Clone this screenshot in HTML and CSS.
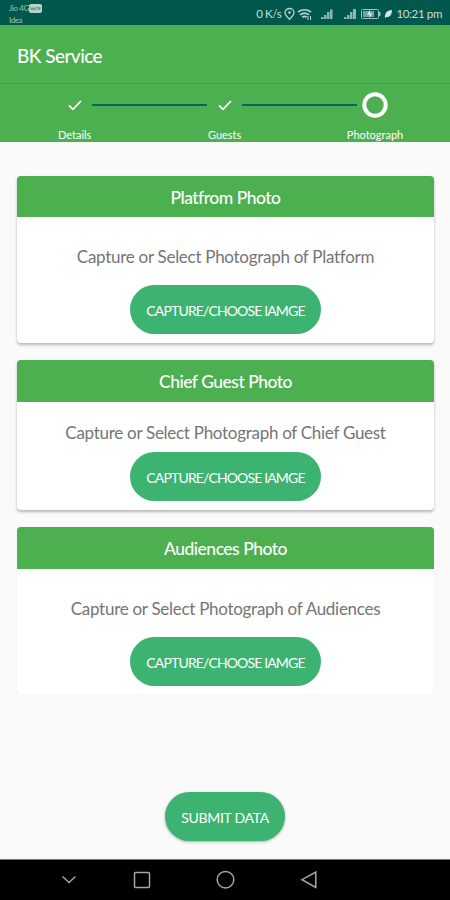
FILE: index.html
```html
<!DOCTYPE html>
<html lang="en">
<head>
    <meta charset="UTF-8">
    <meta name="viewport" content="width=device-width, initial-scale=1.0">
    <title>BK Service</title>
    <link rel="stylesheet" href="styles.css">
</head>
<body>
    <!-- Status bar -->
    <div class="status-bar">
        <div class="carriers">
            <div class="carrier">Jio 4G<span class="volte">VoLTE</span></div>
            <div class="carrier">Idea</div>
        </div>
        <div class="status-right">
            <span class="speed">0 K/s</span>
            <svg class="status-icons" width="110" height="14" viewBox="0 0 110 14">
                <!-- location -->
                <path d="M6.500 12.300C4 9.800 2 8 2 5.500a4.500 4 0 0 1 9 0C11 8 9 9.800 6.500 12.300z" fill="none" stroke="#b5d3cd" stroke-width="1.300"/>
                <circle cx="6.500" cy="5.500" r="1.300" fill="#b5d3cd"/>
                <!-- wifi -->
                <g fill="none" stroke="#b5d3cd" stroke-width="1.700">
                    <path d="M15 5q6.500-4.500 13 0"/>
                    <path d="M17 7.800q4.500-3.500 9 0"/>
                    <path d="M19.300 10.300q2.200-1.800 4.400 0"/>
                    <path d="M25 9v4M27.500 9v4" stroke-width="1"/>
                </g>
                <!-- signal -->
                <g fill="#8ab8af">
                    <path d="M38 10h2.500v2H38zM41 8h2.500v4H41zM44 5h2.500v7H44zM47 2.500h2.500v9.500H47z"/>
                    <path d="M61 10h2.500v2H61zM64 8h2.500v4H64zM67 5h2.500v7H67zM70 2h3v10h-3z"/>
                </g>
                <!-- battery -->
                <rect x="78.500" y="2.500" width="17" height="9" rx="1" fill="none" stroke="#9cc4bc"/>
                <rect x="80" y="4" width="11" height="6" fill="#6fa59b"/>
                <rect x="96" y="5" width="1.500" height="4" fill="#9cc4bc"/>
                <path d="M87 3l-3 4.500h2.500V11l3-4.500H87z" fill="#e0eeeb"/>
                <!-- power saving leaf -->
                <path d="M102 11.500c-.5-5 1.500-8 7-8.500-.2 5-2 7.500-6 7z" fill="#d5e7e3"/>
            </svg>
            <span class="time">10:21 pm</span>
        </div>
    </div>

    <header class="app-bar">
        <h1>BK Service</h1>
    </header>

    <!-- Steps -->
    <div class="stepper">
        <div class="step">
            <svg class="step-icon" width="28" height="28" viewBox="0 0 28 28"><path d="M8 14.500l4 3.800 8-8.300" fill="none" stroke="#fff" stroke-width="1.800"/></svg>
            <span class="step-label">Details</span>
        </div>
        <div class="step-line"></div>
        <div class="step">
            <svg class="step-icon" width="28" height="28" viewBox="0 0 28 28"><path d="M8 14.500l4 3.800 8-8.300" fill="none" stroke="#fff" stroke-width="1.800"/></svg>
            <span class="step-label">Guests</span>
        </div>
        <div class="step-line"></div>
        <div class="step">
            <svg class="step-icon" width="28" height="28" viewBox="0 0 28 28"><circle cx="14" cy="14" r="10.700" fill="none" stroke="#fff" stroke-width="4"/></svg>
            <span class="step-label">Photograph</span>
        </div>
    </div>

    <main>
        <section class="card">
            <h2>Platfrom Photo</h2>
            <p>Capture or Select Photograph of Platform</p>
            <button class="btn">CAPTURE/CHOOSE IAMGE</button>
        </section>

        <section class="card card-compact">
            <h2>Chief Guest Photo</h2>
            <p>Capture or Select Photograph of Chief Guest</p>
            <button class="btn">CAPTURE/CHOOSE IAMGE</button>
        </section>

        <section class="card card-flat">
            <h2>Audiences Photo</h2>
            <p>Capture or Select Photograph of Audiences</p>
            <button class="btn">CAPTURE/CHOOSE IAMGE</button>
        </section>

        <button class="btn submit">SUBMIT DATA</button>
    </main>

    <!-- System navigation -->
    <nav class="nav-bar">
        <svg width="450" height="40" viewBox="0 0 450 40" fill="none" stroke="#a6a6a6" stroke-width="1.500">
            <path d="M62.500 16.500l6.500 6 6.500-6"/>
            <rect x="134.500" y="12.500" width="15" height="15" rx="1"/>
            <circle cx="225.500" cy="19.700" r="8.300"/>
            <path d="M315.800 12v15.500L302 19.700z"/>
        </svg>
    </nav>
</body>
</html>
```
FILE: styles.css
```css
* {
    box-sizing: border-box;
}

body {
    margin: 0;
    width: 450px;
    height: 900px;
    overflow: hidden;
    display: flex;
    flex-direction: column;
    background-color: #fafafa;
    font-family: Lato, "Open Sans", sans-serif;
}

/* Status bar */
.status-bar {
    height: 25px;
    flex: none;
    padding: 0 8px 0 9px;
    display: flex;
    justify-content: space-between;
    background-color: #00574b;
    color: #c9dfda;
}

.carriers {
    padding-top: 2px;
    font-size: 8px;
    line-height: 12px;
    letter-spacing: -0.4px;
    color: #9cc4bc;
}

.carrier {
    display: flex;
    align-items: center;
}

.volte {
    width: 13px;
    height: 9px;
    border-radius: 2px;
    background-color: #b5d3cd;
    color: #00574b;
    font-size: 4px;
    line-height: 9px;
    text-align: center;
    letter-spacing: 0;
}

.status-right {
    display: flex;
    align-items: center;
    padding-top: 2px;
    font-size: 11.5px;
    letter-spacing: -0.35px;
}

.status-icons {
    margin: 0 3px 0 2px;
}

/* App bar */
.app-bar {
    height: 59px;
    flex: none;
    padding: 0 17px;
    display: flex;
    align-items: center;
    background-color: #4caf50;
    border-bottom: 1px solid #43a047;
}

h1 {
    margin: 4px 0 0;
    color: #fff;
    font-size: 19px;
    font-weight: 500;
    line-height: 24px;
    letter-spacing: -0.55px;
}

/* Stepper */
.stepper {
    height: 58px;
    flex: none;
    padding: 7px 57px 0;
    display: flex;
    justify-content: space-between;
    background-color: #4caf50;
}

.step {
    width: 36px;
    display: flex;
    flex-direction: column;
    align-items: center;
}

.step-icon {
    flex: none;
}

.step-label {
    margin-top: 9px;
    color: #fff;
    font-size: 11px;
    line-height: 14px;
}

.step-line {
    width: 117px;
    height: 2px;
    margin-top: 13px;
    background-color: #00695c;
}

/* Cards */
main {
    flex: 1;
    padding: 34px 16px 0 17px;
    display: flex;
    flex-direction: column;
    align-items: center;
}

.card {
    width: 417px;
    height: 167px;
    margin-bottom: 17px;
    flex: none;
    display: flex;
    flex-direction: column;
    align-items: center;
    border-radius: 4px;
    background-color: #fff;
    box-shadow: 0 2px 3px rgba(0, 0, 0, 0.27);
}

.card-compact {
    height: 150px;
}

.card-flat {
    margin-bottom: 98px;
    box-shadow: 0 0 1px rgba(0, 0, 0, 0.15);
}

h2 {
    width: 100%;
    height: 41px;
    margin: 0;
    flex: none;
    border-radius: 4px 4px 0 0;
    background-color: #4caf50;
    color: #fff;
    font-size: 17.5px;
    font-weight: 500;
    line-height: 43px;
    letter-spacing: -0.5px;
    text-align: center;
}

p {
    margin: 27px 0 16px;
    color: #757575;
    font-size: 17px;
    line-height: 25px;
    letter-spacing: -0.28px;
    white-space: nowrap;
}

.card-compact h2,
.card-flat h2 {
    height: 42px;
}

.card-compact p {
    margin: 18px 0 7px;
}

.btn {
    width: 191px;
    height: 49px;
    padding: 1px 0 0;
    flex: none;
    border: none;
    border-radius: 25px;
    background-color: #3cb371;
    color: #fff;
    font-family: inherit;
    font-size: 14px;
    letter-spacing: -0.85px;
    white-space: nowrap;
}

.submit {
    width: 120px;
    margin-right: 1px;
    letter-spacing: -0.3px;
    box-shadow: 0 1px 3px rgba(0, 0, 0, 0.3);
}

/* System navigation */
.nav-bar {
    height: 41px;
    flex: none;
    border-top: 1px solid #777;
    background-color: #000;
}
```
